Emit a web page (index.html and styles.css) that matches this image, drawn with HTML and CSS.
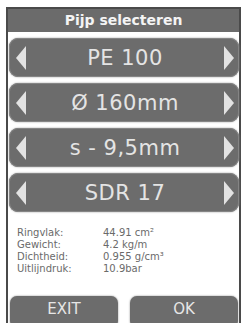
FILE: index.html
```html
<!DOCTYPE html>
<html lang="nl">
  <head>
    <meta charset="UTF-8" />
    <meta name="viewport" content="width=device-width, initial-scale=1.0" />
    <title>Pijp selecteren</title>
    <link rel="stylesheet" href="styles.css">
  </head>
  <body>
    <div class="device">
      <div class="header">Pijp selecteren</div>
      <div class="selectors">
        <div class="selector">
          <span class="arrow left"></span>
          <span class="value">PE 100</span>
          <span class="arrow right"></span>
        </div>
        <div class="selector">
          <span class="arrow left"></span>
          <span class="value">Ø 160mm</span>
          <span class="arrow right"></span>
        </div>
        <div class="selector">
          <span class="arrow left"></span>
          <span class="value">s - 9,5mm</span>
          <span class="arrow right"></span>
        </div>
        <div class="selector">
          <span class="arrow left"></span>
          <span class="value">SDR 17</span>
          <span class="arrow right"></span>
        </div>
      </div>
      <div class="info">
        <span>Ringvlak:</span><span>44.91 cm²</span>
        <span>Gewicht:</span><span>4.2 kg/m</span>
        <span>Dichtheid:</span><span>0.955 g/cm³</span>
        <span>Uitlijndruk:</span><span>10.9bar</span>
      </div>
      <div class="buttons">
        <button class="btn">EXIT</button>
        <button class="btn">OK</button>
      </div>
    </div>
  </body>
</html>
```

FILE: styles.css
```css
body {
  margin: 0;
  background-color: #fff;
  font-family: 'DejaVu Sans', sans-serif;
  overflow: hidden;
}
.device {
  margin: 7px 0 0 6px;
  width: 231px;
  height: 330px;
  border: 2px solid #4a4a4a;
  border-bottom: none;
  background-color: #fff;
}
.header {
  height: 23px;
  line-height: 22px;
  background-color: #6b6b6b;
  color: #f4f4f4;
  font-weight: bold;
  font-size: 14px;
  text-align: center;
}
.selectors {
  display: flex;
  flex-direction: column;
  gap: 6px;
  padding: 6px 0 0 1px;
}
.selector {
  height: 39px;
  display: flex;
  align-items: center;
  justify-content: space-between;
  padding: 0 5px 0 7px;
  background-color: #6c6c6c;
  border-radius: 9px;
  box-shadow: inset 0 0 0 1px #858585, 0 0 2px #9a9a9a;
  color: #e4e4e4;
}
.value {
  font-size: 21px;
  letter-spacing: 0.5px;
}
.arrow {
  width: 0;
  height: 0;
  border-top: 12px solid transparent;
  border-bottom: 12px solid transparent;
}
.arrow.left {
  border-right: 10px solid #e2e2e2;
}
.arrow.right {
  border-left: 10px solid #e2e2e2;
}
.info {
  display: grid;
  grid-template-columns: 86px auto;
  padding: 15px 0 0 9px;
  font-size: 10px;
  line-height: 12px;
  color: #6a6a6a;
}
.buttons {
  display: grid;
  grid-template-columns: repeat(2, 108px);
  gap: 12px;
  padding: 21px 0 0 2px;
}
.btn {
  height: 32px;
  padding: 0 0 6px;
  border: none;
  border-radius: 7px;
  background-color: #6c6c6c;
  box-shadow: 0 0 2px #8a8a8a;
  color: #e6e6e6;
  font-family: 'DejaVu Sans', sans-serif;
  font-size: 15px;
}
```
